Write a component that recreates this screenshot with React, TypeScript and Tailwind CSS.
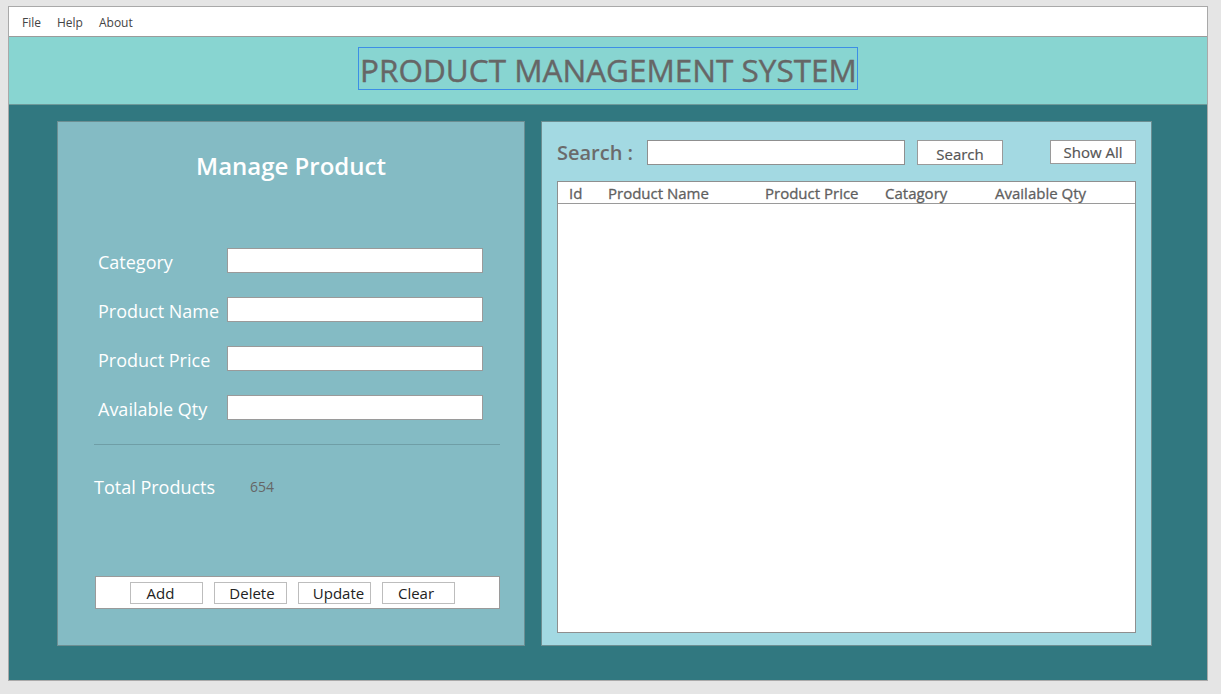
import React from "react";

const font = { fontFamily: '"Open Sans", "Noto Sans", sans-serif' };

function Field({ label }: { label: string }) {
  return (
    <div className="flex items-center h-[25px]">
      <div className="w-[129px] pt-[3px] text-[18px] text-white leading-none">{label}</div>
      <div className="w-[256px] h-[25px] bg-white border border-[#9a9a9a]" />
    </div>
  );
}

function Btn({ label, cls }: { label: string; cls: string }) {
  return (
    <div className={"w-[73px] h-[22px] border border-[#bdbdbd] bg-white flex items-center justify-center pt-[2px] text-[15px] text-[#222] leading-none " + cls}>
      {label}
    </div>
  );
}

export default function App() {
  return (
    <div className="w-[1221px] h-[694px] bg-[#e5e5e5] pt-[6px] pl-[8px]" style={font}>
      <div className="w-[1200px] h-[675px] border border-[#a9a9a9] flex flex-col">
        {/* menu */}
        <div className="h-[30px] bg-white border-b border-[#9b9b9b] flex items-center pl-[13px] pt-[2px] gap-[16px] text-[12px] text-[#444]">
          <span>File</span>
          <span>Help</span>
          <span>About</span>
        </div>
        {/* header */}
        <div className="h-[68px] bg-[#88d5d1] border-b border-[#6d9a9a] flex items-center justify-center pb-[4px]">
          <div className="h-[43px] border border-[#3c8ee6] flex items-center px-[0px] pl-[1px] pt-[2px] text-[31.5px] text-[#666666] leading-none [-webkit-text-stroke:0.4px_#666666]">
            PRODUCT MANAGEMENT SYSTEM
          </div>
        </div>
        {/* main */}
        <div className="flex-1 bg-[#317880] pl-[48px] pt-[16px] flex gap-[16px]">
          {/* left panel */}
          <div className="w-[468px] h-[525px] bg-[#84bbc4] border border-[#6c8e92] flex flex-col">
            <div className="h-[87px] flex items-center justify-center pt-[1px] text-[24px] font-semibold text-white leading-none">
              Manage Product
            </div>
            <div className="mt-[39px] ml-[40px] flex flex-col gap-[24px]">
              <Field label="Category" />
              <Field label="Product Name" />
              <Field label="Product Price" />
              <Field label="Available Qty" />
            </div>
            <div className="mt-[24px] ml-[36px] w-[406px] h-[1px] bg-[#6f9ea6]" />
            <div className="mt-[31px] ml-[36px] flex items-center h-[22px]">
              <span className="w-[156px] text-[18px] text-white leading-none">Total Products</span>
              <span className="text-[14px] text-[#666] leading-none">654</span>
            </div>
            <div className="mt-[78px] ml-[37px] w-[405px] h-[33px] bg-white border border-[#9a9a9a] flex items-center pl-[34px] gap-[11px]">
              <Btn label="Add" cls="pr-[12px]" />
              <Btn label="Delete" cls="pl-[3px]" />
              <Btn label="Update" cls="pl-[8px]" />
              <Btn label="Clear" cls="pr-[5px]" />
            </div>
          </div>
          {/* right panel */}
          <div className="w-[611px] h-[525px] bg-[#a3d9e2] border border-[#6c8e92] flex flex-col pl-[15px]">
            <div className="mt-[18px] flex items-center h-[25px]">
              <span className="w-[90px] text-[20px] font-semibold text-[#6b6b6b] leading-none">Search :</span>
              <div className="w-[258px] h-[25px] bg-white border border-[#8f8f8f]" />
              <div className="ml-[12px] w-[86px] h-[25px] bg-white border border-[#9a9a9a] flex items-center justify-center pt-[3px] text-[15px] text-[#555] leading-none [-webkit-text-stroke:0.2px_#555555]">
                Search
              </div>
              <div className="ml-[47px] w-[86px] h-[24px] -mt-[1px] bg-white border border-[#9a9a9a] flex items-center justify-center text-[15px] text-[#555] leading-none [-webkit-text-stroke:0.2px_#555555]">
                Show All
              </div>
            </div>
            <div className="mt-[16px] w-[579px] h-[452px] bg-white border border-[#8f8f8f] flex flex-col">
              <div className="h-[22px] border-b border-[#9a9a9a] text-[15px] text-[#5f5f5f] leading-none flex items-center pt-[2px] [-webkit-text-stroke:0.3px_#5f5f5f]">
                <span className="w-[50px] pl-[11px]">Id</span>
                <span className="w-[157px]">Product Name</span>
                <span className="w-[120px]">Product Price</span>
                <span className="w-[110px]">Catagory</span>
                <span>Available Qty</span>
              </div>
            </div>
          </div>
        </div>
      </div>
    </div>
  );
}
